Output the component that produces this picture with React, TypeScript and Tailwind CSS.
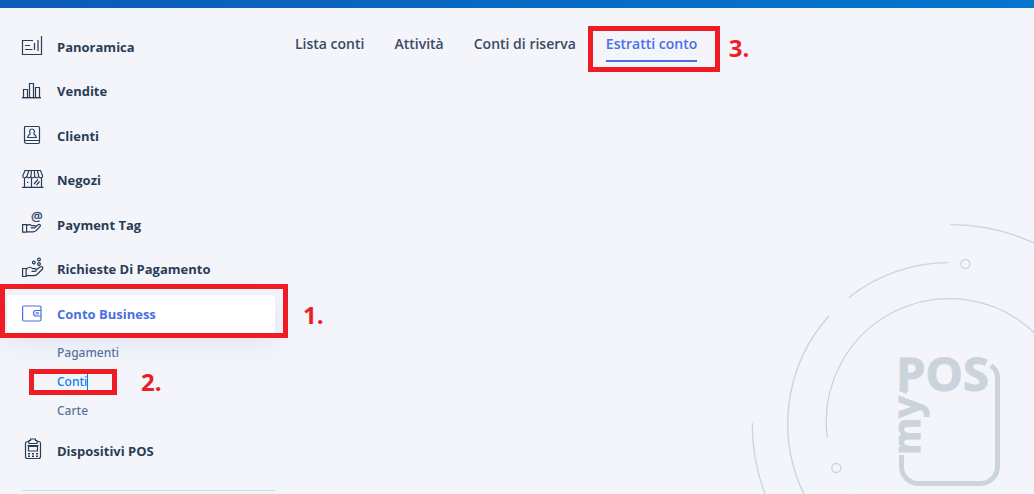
import type { ReactNode } from "react";

interface NavItem {
  label: string;
  icon: ReactNode;
}

const TABS = ["Lista conti", "Attività", "Conti di riserva", "Estratti conto"];
const SUB_ITEMS = ["Pagamenti", "Conti", "Carte"];
const ACTIVE_ITEM = "Conto Business";
const ACTIVE_SUB = "Conti";
const ACTIVE_TAB = "Estratti conto";

const NAV_ITEMS: NavItem[] = [
  {
    label: "Panoramica",
    icon: (
      <>
        <path d="M11 4.500H.5v14h19V0" />
        <path d="M3 9.500h5M3 13.500h7.500M12.500 7v7M16 4v11" />
      </>
    ),
  },
  {
    label: "Vendite",
    icon: (
      <>
        <path d="M1.500 17.500v-8h4v8M7.500 17.500v-14h4v14M13.500 17.500v-10h4v10" />
        <path d="M0 17.700h19" strokeWidth="1.400" />
      </>
    ),
  },
  {
    label: "Clienti",
    icon: (
      <>
        <path d="M2.500 15.500v-13a1 1 0 0 1 1-1h13a1 1 0 0 1 1 1v14.500a1.500 1.500 0 0 1-1.500 1.500H4.500a2 2 0 0 1-2-2zM2.500 15.500h15" />
        <path d="M8.500 9C7 7.500 7.300 4 10 4s3 3.500 1.500 5M8.500 9l-2 1.300-.7 2.200h8.400l-.7-2.200-2-1.300" />
      </>
    ),
  },
  {
    label: "Negozi",
    icon: (
      <>
        <path d="M3 1.500h15.500L20.700 7c0 2.400-3.600 2.400-4 0-.3 2.400-3.700 2.400-4 0-.3 2.400-3.700 2.400-4 0-.3 2.400-3.700 2.400-4 0-.3 2.400-4 2.400-4 0zM7 1.500 5 7M9.500 1.500 9 7M12.300 1.500l.4 5.500M15.300 1.500 16.700 7" />
        <path d="M2.500 9v9M9.500 9v9M19.500 9v9M12 15l4-4.500M14.500 16l3-3.500M5 13.500h1.500M0 18.300h21.500" />
      </>
    ),
  },
  {
    label: "Payment Tag",
    icon: (
      <>
        <path d="M.6 10.700h4v7.500h-4zM4.600 11.500c2-1.200 3.500-1.200 5 .1h2.800c1.600 0 1.600 2.300 0 2.300H8.800M13.600 12.800l2.600-2c1.400-1 2.900.3 1.900 1.600l-3.700 4c-1 1-2 1.500-3.500 1.500H4.600" />
        <text x="9" y="7" fontSize="13" fontWeight="400" fill="currentColor" strokeWidth=".3">
          @
        </text>
      </>
    ),
  },
  {
    label: "Richieste Di Pagamento",
    icon: (
      <>
        <path d="M.6 10.500h3.500v8H.6zM4.100 11.500c2.400-2.700 4.400-3 6.400-.8h2.300c1.900 0 1.900 2.600 0 2.600H9.500M14.300 11.800l3.700-2.800c1.800-1.200 3.700.3 2.500 2l-5 5c-1.200 1.200-2.500 1.700-4 1.700H4.100" />
        <circle cx="11.800" cy="4.500" r="1.400" />
        <circle cx="17" cy="1.500" r="1.400" />
        <circle cx="17" cy="6" r="1.400" />
      </>
    ),
  },
  {
    label: "Conto Business",
    icon: (
      <>
        <rect x=".6" y="3" width="18.400" height="15" rx="1.500" />
        <path d="M19 7.500h-5c-3.300 0-3.300 5.500 0 5.500h5" />
        <path d="M14 9.600h2.500v1.400H14z" strokeWidth=".8" />
      </>
    ),
  },
];

const POS_ICON = (
  <>
    <path d="M7 1.500H5.500a2 2 0 0 0-2 2v13a2 2 0 0 0 2 2h11a2 2 0 0 0 2-2v-13a2 2 0 0 0-2-2H15" />
    <path d="M7 3.500v-3h1.500v-1.500h5V.5H15v3zM6.500 6.500h9v4.500h-9zM5.500 5.500h11" />
    <path d="M6 13.700h2M10 13.700h2M14 13.700h2M6 16.300h2M10 16.300h2M14 16.300h2" strokeWidth="1.500" />
  </>
);

function NavIcon({ children }: { children: ReactNode }) {
  return (
    <svg
      className="h-[34px] w-[22px] shrink-0 overflow-visible"
      viewBox="0 -5 22 34"
      fill="none"
      stroke="currentColor"
      strokeWidth="1.2"
      aria-hidden="true"
    >
      {children}
    </svg>
  );
}

function NavLink({ label, icon, active = false }: NavItem & { active?: boolean }) {
  return (
    <a
      href="#"
      className={
        active
          ? "flex h-[39px] items-center gap-[13px] rounded-sm bg-white pl-[15px] text-[13px] font-bold text-[#4a6fe3] shadow-[0_8px_24px_rgba(60,80,130,0.1)]"
          : "flex h-[39px] items-center gap-[13px] pl-[15px] text-[13px] font-bold text-[#2b3d55]"
      }
    >
      <NavIcon>{icon}</NavIcon>
      {label}
    </a>
  );
}

function Step({ children, className }: { children: string; className: string }) {
  return (
    <span className={`pointer-events-none absolute text-2xl font-bold text-[#ee1c24] ${className}`}>
      {children}
    </span>
  );
}

function Highlight({ className }: { className: string }) {
  return <span className={`pointer-events-none absolute border-[5px] border-[#ee1c24] ${className}`} />;
}

function Sidebar() {
  return (
    <nav className="w-[275px] shrink-0 pl-[7px] pt-5">
      <ul className="flex min-h-[306px] flex-col justify-between">
        {NAV_ITEMS.map((item) => {
          const active = item.label === ACTIVE_ITEM;
          return (
            <li key={item.label} className="relative">
              <NavLink {...item} active={active} />
              {active && (
                <>
                  <Highlight className="-bottom-1 -left-[7px] -right-[13px] -top-[11px]" />
                  <Step className="left-[296px] top-1">1.</Step>
                </>
              )}
            </li>
          );
        })}
      </ul>
      <ul className="pt-1 font-['Noto_Sans',sans-serif] text-xs font-medium">
        {SUB_ITEMS.map((label) => (
          <li key={label} className="relative flex h-[29px] items-center pl-[50px]">
            {label === ACTIVE_SUB ? (
              <>
                <a href="#" className="border-r border-[#0a7cf0] text-[#0a7cf0]">
                  {label}
                </a>
                <Highlight className="left-[22px] top-[2px] h-[26px] w-[88px]" />
                <Step className="-top-px left-[134px] font-['Open_Sans',sans-serif]">2.</Step>
              </>
            ) : (
              <a href="#" className="text-[#55759a]">
                {label}
              </a>
            )}
          </li>
        ))}
      </ul>
      <div className="pt-[7px]">
        <NavLink label="Dispositivi POS" icon={POS_ICON} />
      </div>
      <hr className="ml-[15px] mt-[19px] border-[#cddae8]" />
    </nav>
  );
}

function Tabs() {
  return (
    <nav className="flex items-start gap-[30px] pl-5 pt-[26px] text-sm font-semibold">
      {TABS.map((label) =>
        label === ACTIVE_TAB ? (
          <div key={label} className="relative">
            <a href="#" className="block whitespace-nowrap border-b-2 border-[#4a6fe3] pb-1.5 text-[#4a6fe3]">
              {label}
            </a>
            <Highlight className="-bottom-[10px] -left-[18px] -right-[23px] -top-2" />
            <Step className="left-[123px] -top-[2px]">3.</Step>
          </div>
        ) : (
          <a key={label} href="#" className="whitespace-nowrap text-[#3a4a61]">
            {label}
          </a>
        ),
      )}
    </nav>
  );
}

function BrandArt() {
  return (
    <svg
      className="pointer-events-none absolute bottom-0 right-0 h-[284px] w-[294px]"
      viewBox="740 210 294 284"
      fill="none"
      stroke="#cbd4dc"
      role="img"
      aria-label="myPOS"
    >
      <g strokeWidth="1.3">
        <path d="M950.500 224.700A199 199 0 0 1 1034 243" />
        <path d="M752.300 423A197 197 0 0 0 765 494" />
        <path d="M948.500 262.700A161 161 0 0 0 849 297.500" />
        <path d="M829 316A161 161 0 0 0 804 494" />
        <path d="M827.300 437.500A123 123 0 0 1 1034 332.500M849.500 493.500l1 1" />
        <circle cx="965.300" cy="264" r="4.500" />
        <circle cx="836.300" cy="468" r="4.500" />
      </g>
      <path d="M901.500 455v11.500a17 17 0 0 0 17 17h62a17 17 0 0 0 17-17V378q0-8-6.500-12.500" strokeWidth="5" />
      <path d="M899.500 389v1.500l7 3v-4.500z" fill="#cbd4dc" />
      <g fill="#cbd4dc" strokeWidth="1" fontWeight="700">
        <text x="896" y="391" fontSize="47">
          POS
        </text>
        <text transform="translate(920 455) rotate(-90)" fontSize="38">
          my
        </text>
      </g>
    </svg>
  );
}

export default function App() {
  return (
    <div className="relative min-h-screen overflow-hidden bg-[#f3f5fb] font-['Open_Sans',sans-serif]">
      <header className="h-2 bg-linear-to-r from-[#0c5cba] to-[#0476cd]" />
      <BrandArt />
      <div className="flex">
        <Sidebar />
        <main className="flex-1">
          <Tabs />
        </main>
      </div>
    </div>
  );
}
